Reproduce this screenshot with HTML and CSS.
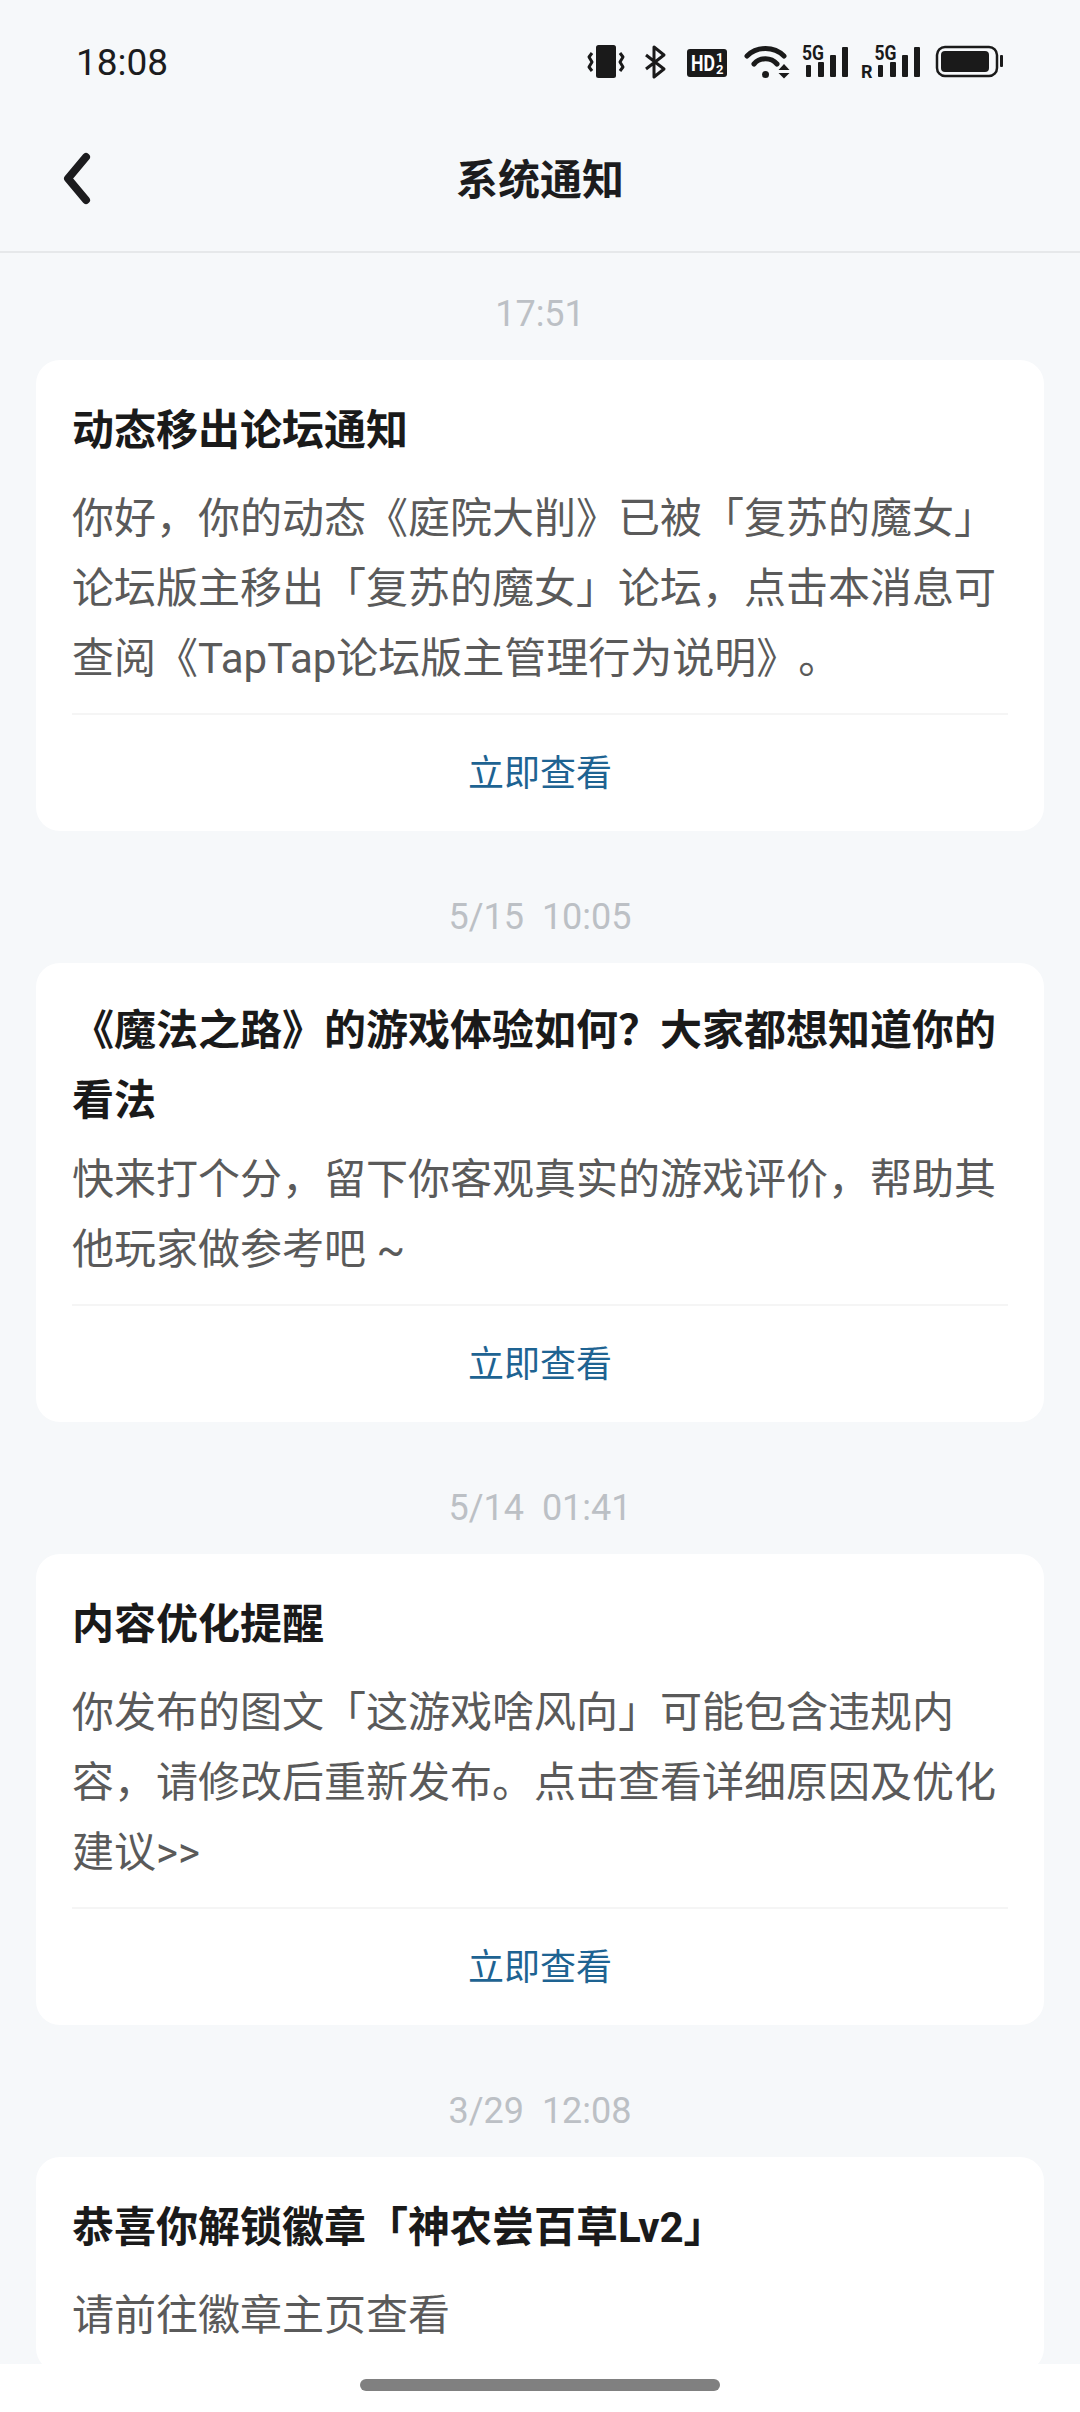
FILE: index.html
```html
<!DOCTYPE html>
<html lang="zh">
<head>
    <meta charset="UTF-8">
    <meta name="viewport" content="width=device-width, initial-scale=1.0">
    <title>系统通知</title>
    <link rel="stylesheet" href="styles.css">
</head>
<body>
    <div class="screen">
        <div class="status-bar">
            <div class="clock">18:08</div>
            <div class="status-icons">
                <svg class="icon-vibrate" viewBox="0 0 36 34">
                    <rect x="8" y="0" width="20" height="33" rx="2.5"/>
                    <path class="line" d="M4 8 L1 12 L4 17 L1 22 L4 26"/>
                    <path class="line" d="M32 8 L35 12 L32 17 L35 22 L32 26"/>
                </svg>
                <svg class="icon-bt" viewBox="0 0 23 34">
                    <path class="line" d="M2 10 L20 24 L10 32 V2 L20 10 L2 24"/>
                </svg>
                <svg class="icon-hd" viewBox="0 0 40 28">
                    <rect x="0" y="0" width="40" height="28" rx="3"/>
                    <text class="hd-big" x="4" y="22" textLength="24" lengthAdjust="spacingAndGlyphs">HD</text>
                    <text class="hd-small" x="29" y="13">1</text>
                    <text class="hd-small" x="29" y="25">2</text>
                </svg>
                <svg class="icon-wifi" viewBox="0 0 45 34">
                    <path class="arc" d="M2 11 C12 1 29 1 39 11"/>
                    <path class="arc" d="M9 19 C15 12 26 12 32 19"/>
                    <circle cx="20.5" cy="29.5" r="3.5"/>
                    <path d="M39 19 L44.500 25 H33.500 Z"/>
                    <path d="M33.500 28 H44.500 L39 33.500 Z"/>
                </svg>
                <svg class="icon-signal" viewBox="0 0 48 34">
                    <text class="net" x="0" y="15" textLength="22" lengthAdjust="spacingAndGlyphs">5G</text>
                    <rect x="4" y="20" width="5" height="12" rx="1"/>
                    <rect x="16" y="17" width="6" height="15" rx="1"/>
                    <rect x="28" y="10" width="6" height="22" rx="1"/>
                    <rect x="40" y="2" width="6" height="30" rx="1"/>
                </svg>
                <svg class="icon-signal-r" viewBox="0 0 60 34">
                    <text class="net" x="13.500" y="15" textLength="22" lengthAdjust="spacingAndGlyphs">5G</text>
                    <text class="net-r" x="0" y="33">R</text>
                    <rect x="17" y="20" width="5" height="12" rx="1"/>
                    <rect x="29" y="17" width="6" height="15" rx="1"/>
                    <rect x="41" y="10" width="6" height="22" rx="1"/>
                    <rect x="53" y="2" width="6" height="30" rx="1"/>
                </svg>
                <svg class="icon-battery" viewBox="0 0 68 34">
                    <rect class="shell" x="1" y="2" width="60" height="29" rx="8"/>
                    <rect x="5" y="6" width="48" height="21" rx="4"/>
                    <rect x="64" y="10" width="3" height="12" rx="1"/>
                </svg>
            </div>
        </div>

        <div class="nav-bar">
            <svg class="back-icon" viewBox="0 0 34 60">
                <path d="M24 9 L6 30.500 L24 52"/>
            </svg>
            <div class="nav-title">系统通知</div>
        </div>

        <div class="list">
            <div class="time">17:51</div>
            <div class="card">
                <div class="card-title">动态移出论坛通知</div>
                <div class="card-text">你好，你的动态《庭院大削》已被「复苏的魔女」论坛版主移出「复苏的魔女」论坛，点击本消息可查阅《TapTap论坛版主管理行为说明》。</div>
                <div class="card-link">立即查看</div>
            </div>

            <div class="time">5/15  10:05</div>
            <div class="card">
                <div class="card-title two-line">《魔法之路》的游戏体验如何？大家都想知道你的看法</div>
                <div class="card-text">快来打个分，留下你客观真实的游戏评价，帮助其他玩家做参考吧 ~</div>
                <div class="card-link">立即查看</div>
            </div>

            <div class="time">5/14  01:41</div>
            <div class="card">
                <div class="card-title">内容优化提醒</div>
                <div class="card-text">你发布的图文「这游戏啥风向」可能包含违规内容，请修改后重新发布。点击查看详细原因及优化建议&gt;&gt;</div>
                <div class="card-link">立即查看</div>
            </div>

            <div class="time">3/29  12:08</div>
            <div class="card">
                <div class="card-title">恭喜你解锁徽章「神农尝百草Lv2」</div>
                <div class="card-text">请前往徽章主页查看</div>
            </div>
        </div>

        <div class="home-bar">
            <div class="home-pill"></div>
        </div>
    </div>
</body>
</html>
```

FILE: styles.css
```css
* {
    margin: 0;
    padding: 0;
    box-sizing: border-box;
}

body {
    font-family: Roboto, "Noto Sans CJK SC", sans-serif;
    background: #f6f8fa;
    text-spacing-trim: space-all;
}

.screen {
    width: 1080px;
    height: 2412px;
    display: flex;
    flex-direction: column;
    overflow: hidden;
}

.status-bar {
    height: 104px;
    flex-shrink: 0;
    display: flex;
    justify-content: space-between;
    padding: 42px 76px 0 76px;
}

.clock {
    font-size: 37px;
    line-height: 42px;
    color: #1c1c1e;
}

.status-icons {
    display: flex;
    align-items: flex-start;
    height: 34px;
    margin-top: 3px;
}

.status-icons svg {
    height: 34px;
    fill: #1a1a1a;
    flex-shrink: 0;
    overflow: visible;
}

.status-icons .line {
    fill: none;
    stroke: #1a1a1a;
    stroke-width: 3;
    stroke-linejoin: round;
}

.status-icons .arc {
    fill: none;
    stroke: #1a1a1a;
    stroke-width: 5;
    stroke-linecap: round;
}

.icon-vibrate { width: 36px; }
.icon-bt { width: 23px; margin-left: 20px; }
.status-icons .icon-hd { width: 40px; height: 28px; margin-left: 20px; margin-top: 4px; }
.icon-wifi { width: 45px; margin-left: 18px; }
.icon-signal { width: 48px; margin-left: 12px; }
.icon-signal-r { width: 60px; margin-left: 11px; }
.icon-battery { width: 68px; margin-left: 15px; }

.status-icons .shell {
    fill: none;
    stroke: #1a1a1a;
    stroke-width: 2.5;
}

.hd-big {
    font-family: Roboto, sans-serif;
    font-size: 22px;
    font-weight: 700;
    fill: #fff;
}

.hd-small {
    font-family: Roboto, sans-serif;
    font-size: 13px;
    font-weight: 700;
    fill: #fff;
}

.net {
    font-family: Roboto, sans-serif;
    font-size: 21px;
    font-weight: 700;
}

.net-r {
    font-family: Roboto, sans-serif;
    font-size: 18px;
    font-weight: 700;
}

.nav-bar {
    height: 149px;
    flex-shrink: 0;
    display: flex;
    align-items: center;
    justify-content: center;
    position: relative;
    border-bottom: 2px solid #e6e8ea;
    padding-bottom: 3px;
}

.back-icon {
    position: absolute;
    left: 62px;
    top: 44px;
    width: 34px;
    height: 60px;
    fill: none;
    stroke: #1c1c1e;
    stroke-width: 8;
    stroke-linecap: round;
    stroke-linejoin: round;
}

.nav-title {
    font-size: 42px;
    font-weight: 700;
    color: #1c1c1e;
}

.list {
    flex: 1;
    overflow: hidden;
    padding: 0 36px;
}

.time {
    height: 107px;
    padding-top: 36px;
    text-align: center;
    font-size: 36px;
    line-height: 50px;
    color: #bcc0c5;
    white-space: pre;
}

.list .card + .time {
    height: 132px;
    padding-top: 61px;
}

.card {
    background: #fff;
    border-radius: 24px;
    padding: 36px 36px 0;
}

.card-title {
    font-size: 42px;
    font-weight: 700;
    line-height: 70px;
    color: #1a1a1a;
    margin-bottom: 18px;
}

.card-title.two-line {
    margin-top: -3px;
    margin-bottom: 9px;
}

.card-text {
    font-size: 42px;
    line-height: 70px;
    color: #5a5a5a;
    padding-bottom: 19px;
    border-bottom: 2px solid #f5f5f5;
}

.card-link {
    height: 116px;
    padding-bottom: 6px;
    display: flex;
    align-items: center;
    justify-content: center;
    font-size: 36px;
    color: #1e6392;
}

.home-bar {
    height: 48px;
    flex-shrink: 0;
    background: #fff;
    display: flex;
    justify-content: center;
    padding-top: 15px;
}

.home-pill {
    width: 360px;
    height: 12px;
    border-radius: 6px;
    background: #808080;
}
```
